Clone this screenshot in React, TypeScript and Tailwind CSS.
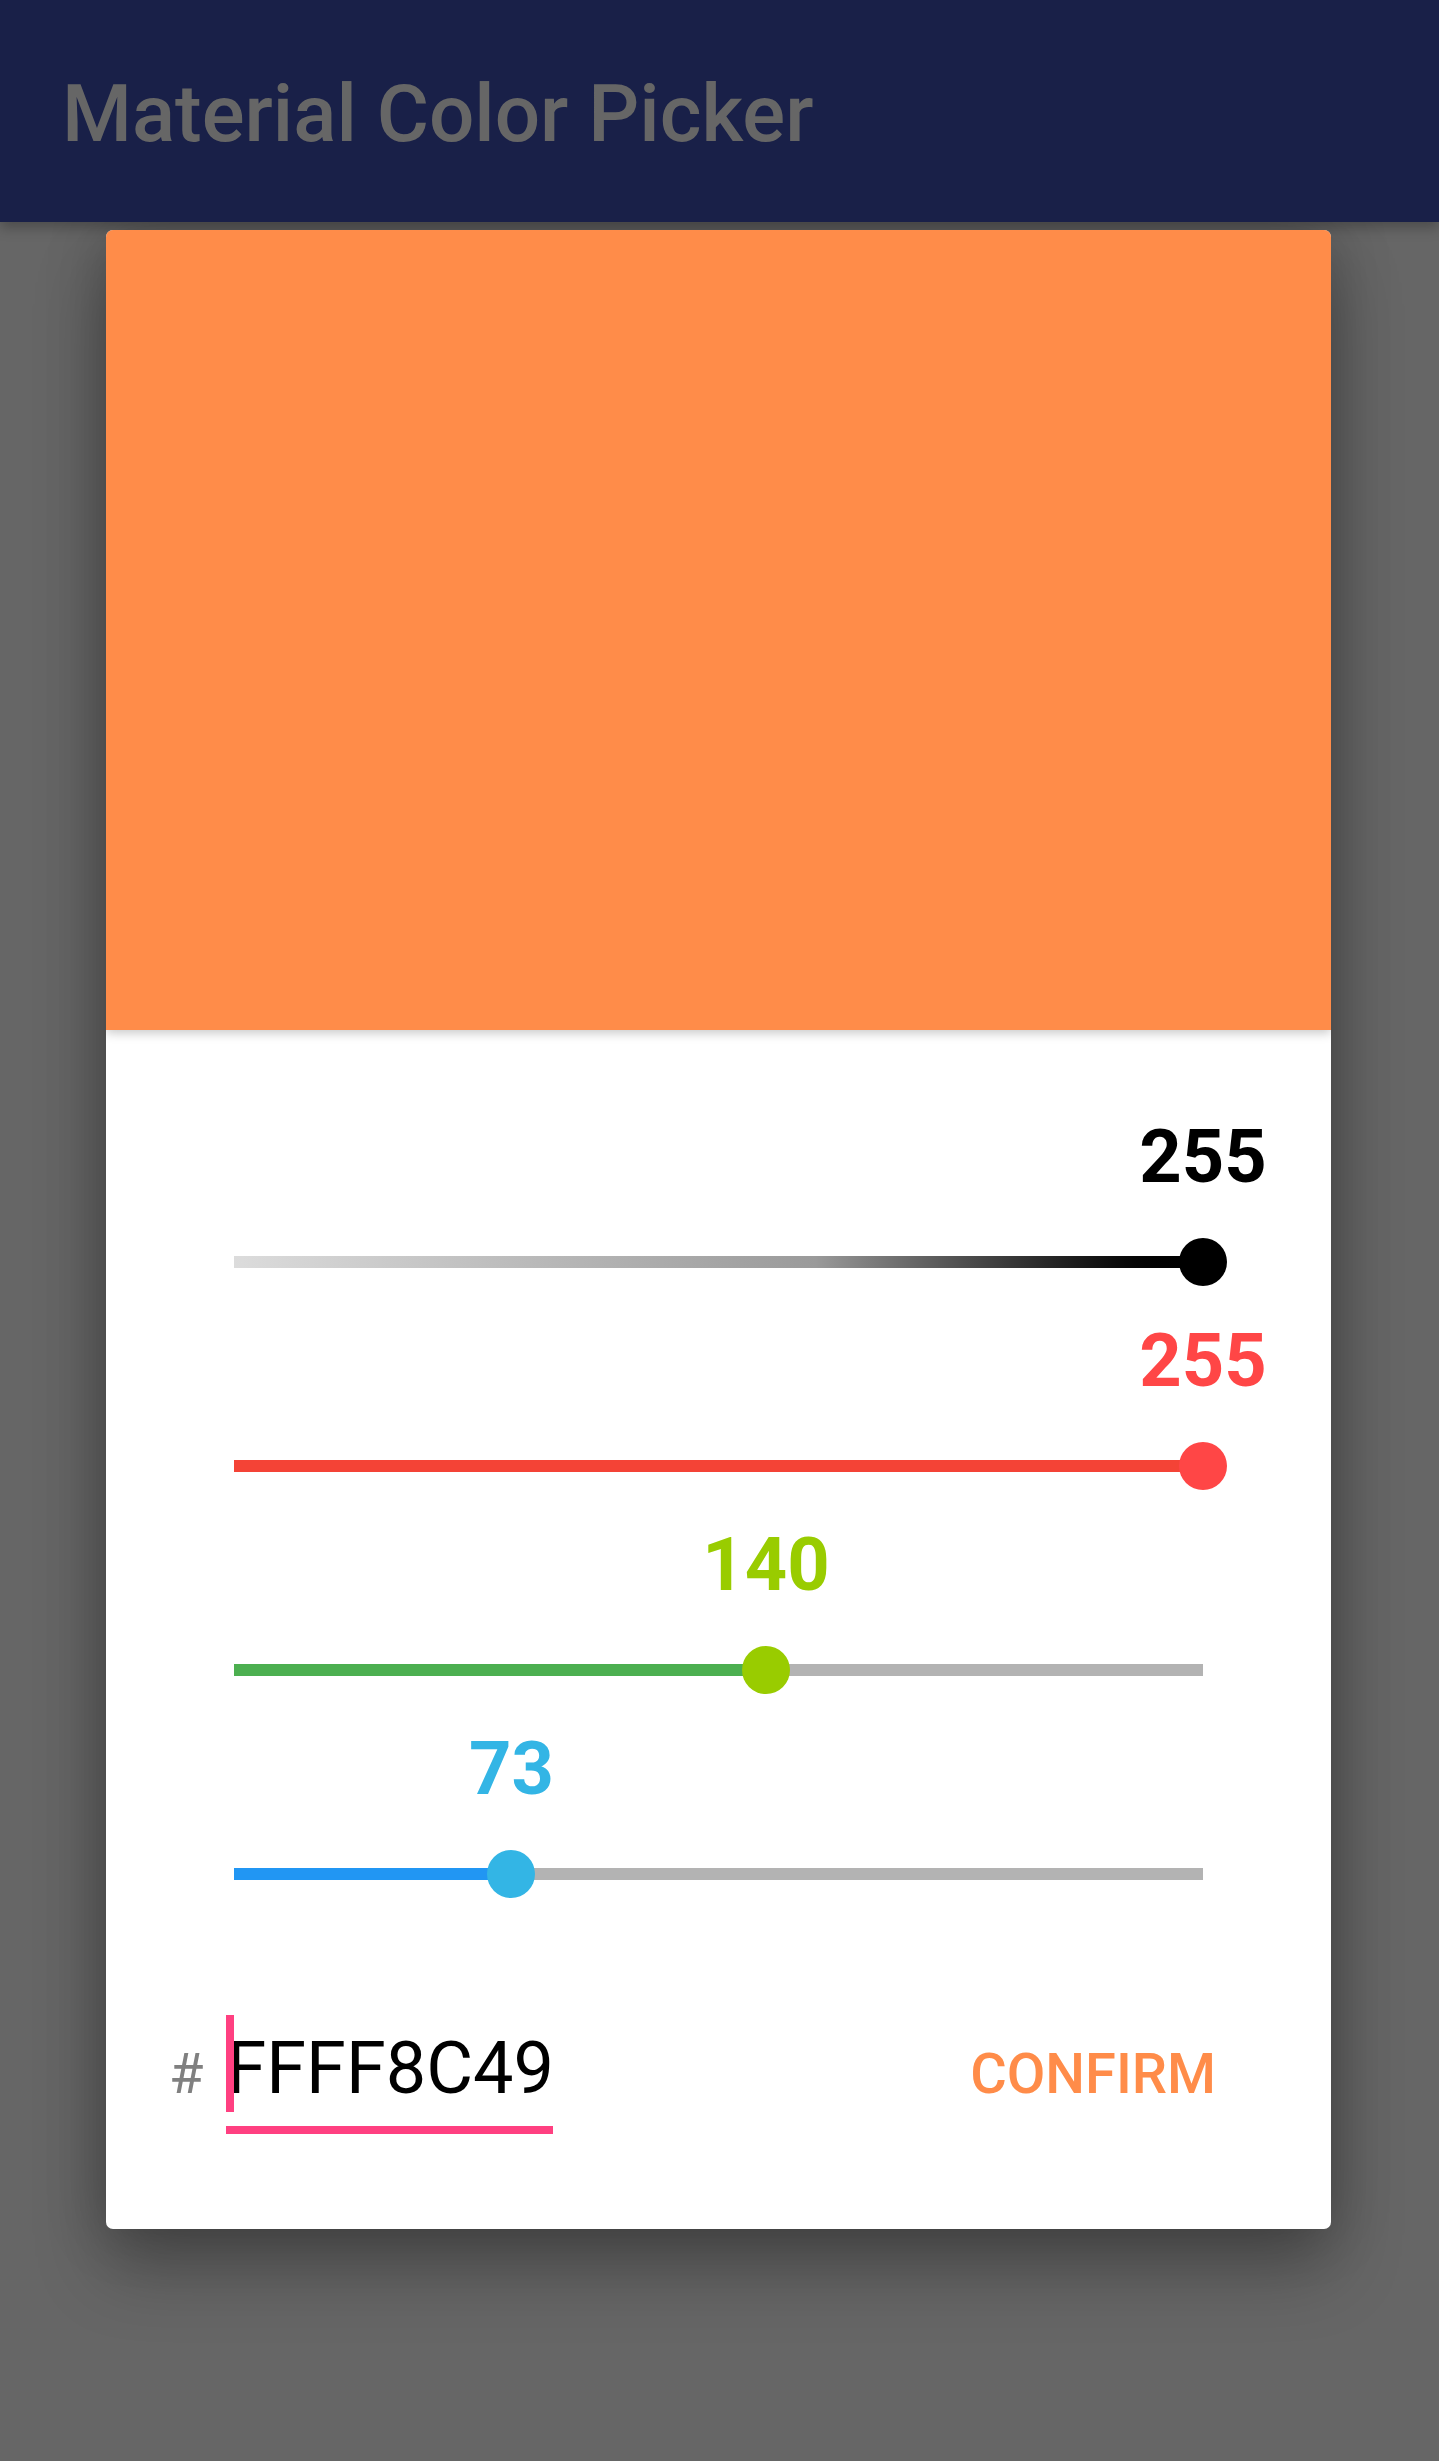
import React from "react";

type S = { value: number; label: string; fill: string; thumb: string; gradient?: boolean };

const sliders: S[] = [
  { value: 255, label: "#000000", fill: "", thumb: "#000000", gradient: true },
  { value: 255, label: "#ff4646", fill: "#f44336", thumb: "#ff4646" },
  { value: 140, label: "#99cc00", fill: "#4caf50", thumb: "#99cc00" },
  { value: 73, label: "#33b5e5", fill: "#2196f3", thumb: "#33b5e5" },
];

function Slider({ s }: { s: S }) {
  const pct = (s.value / 255) * 100;
  return (
    <div className="flex h-[204px] flex-col">
      <div className="relative h-[136px]">
        <span
          className="absolute top-[18px] -translate-x-1/2 text-[74px] font-bold leading-none"
          style={{ left: `${pct}%`, color: s.label }}
        >
          {s.value}
        </span>
      </div>
      <div className="relative flex h-[48px] items-center">
        {s.gradient ? (
          <div className="h-[12px] w-full bg-gradient-to-r from-[#dcdcdc] via-[#9a9a9a] via-60% to-black" />
        ) : (
          <div className="flex h-[12px] w-full bg-[#b3b3b3]">
            <div className="h-full" style={{ width: `${pct}%`, background: s.fill }} />
          </div>
        )}
        <div
          className="absolute top-0 h-[48px] w-[48px] -translate-x-1/2 rounded-full"
          style={{ left: `${pct}%`, background: s.thumb }}
        />
      </div>
    </div>
  );
}

export default function App() {
  return (
    <div
      className="min-h-[2461px] w-full bg-[#666666]"
      style={{ fontFamily: "Roboto, 'Noto Sans', sans-serif" }}
    >
      <header className="relative z-10 flex h-[222px] items-center bg-[#192048] pl-[62px] pt-[6px] shadow-[0_6px_12px_rgba(0,0,0,0.25)]">
        <h1 className="text-[80px] font-medium leading-none text-[#666666]">Material Color Picker</h1>
      </header>
      <div className="ml-[106px] mt-[8px] w-[1225px] overflow-hidden rounded-[7px] bg-white shadow-[0_40px_70px_rgba(0,0,0,0.28),0_0_60px_rgba(0,0,0,0.22)]">
        <div className="relative z-10 h-[800px] bg-[#ff8c49] shadow-[0_3px_10px_rgba(0,0,0,0.22)]" />
        <div className="px-[128px] pt-[72px]">
          {sliders.map((s, i) => (
            <Slider key={i} s={s} />
          ))}
        </div>
        <div className="flex items-baseline justify-between pb-[95px] pl-[63px] pr-[115px] pt-[97px]">
          <div className="flex items-baseline">
            <span className="mr-[23px] text-[56px] leading-none text-[#808080]">#</span>
            <div className="relative w-[327px] border-b-[8px] border-[#ff4081] pb-[21px] pt-[18px]">
              <span className="absolute left-0 top-0 h-[97px] w-[8px] bg-[#ff4081]" />
              <div className="text-[72px] leading-none text-black">FFFF8C49</div>
            </div>
          </div>
          <div className="text-[56px] font-medium leading-none text-[#ff8c49]">CONFIRM</div>
        </div>
      </div>
    </div>
  );
}
